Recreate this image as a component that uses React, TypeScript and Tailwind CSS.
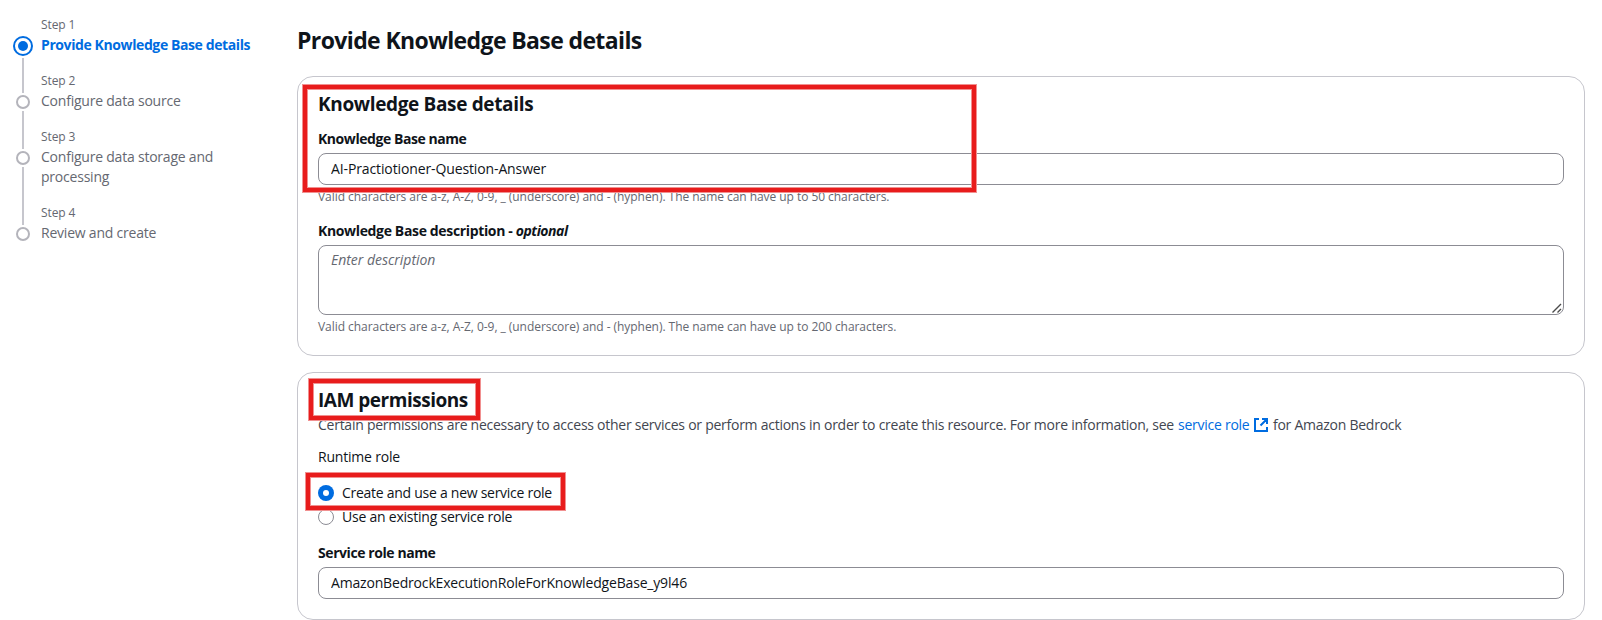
import type { ReactNode } from "react";

const font = "font-['Open_Sans','Noto_Sans',sans-serif]";

const steps = [
  { label: "Configure data source", n: 2 },
  { label: "Configure data storage and processing", n: 3 },
  { label: "Review and create", n: 4 },
];

function Dot() {
  return <span className="size-[14px] shrink-0 rounded-full border-2 border-[#b4b4bb]" />;
}

function StepNav() {
  return (
    <nav className="flex w-[297px] shrink-0 gap-2 pl-[13px]">
      <div className="flex w-5 flex-col items-center gap-0.5 pt-9">
        <span className="flex size-5 shrink-0 items-center justify-center rounded-full border-2 border-[#006ce0]">
          <span className="size-2.5 rounded-full bg-[#006ce0]" />
        </span>
        <span className="h-[35px] w-0.5 bg-[#c6c6cd]" />
        <Dot />
        <span className="h-[38px] w-0.5 bg-[#c6c6cd]" />
        <Dot />
        <span className="h-[58px] w-0.5 bg-[#c6c6cd]" />
        <Dot />
      </div>
      <ol className="flex w-[212px] flex-col gap-[18px] pt-[17px] text-sm text-[#656871]">
        <li className="flex flex-col gap-0.5">
          <span className="text-xs leading-4 tracking-[-0.1px]">Step 1</span>
          <span className="whitespace-nowrap font-bold leading-5 tracking-[-0.4px] text-[#006ce0]">Provide Knowledge Base details</span>
        </li>
        {steps.map((s) => (
          <li key={s.n} className="flex flex-col gap-0.5">
            <span className="text-xs leading-4 tracking-[-0.1px]">Step {s.n}</span>
            <span className="leading-5 tracking-[-0.22px]">{s.label}</span>
          </li>
        ))}
      </ol>
    </nav>
  );
}

function Card({ children }: { children: ReactNode }) {
  return <section className="flex flex-col rounded-2xl border border-[#c6c6cd] px-5 pb-5 pt-[15px]">{children}</section>;
}

function Highlight({ className }: { className: string }) {
  return (
    <div className={`pointer-events-none absolute border border-[#f19090] ${className}`}>
      <div className="size-full border-4 border-[#e81c1c]">
        <div className="size-full border border-[#f19090]" />
      </div>
    </div>
  );
}

function TextInput({ value, className }: { value: string; className: string }) {
  return (
    <input
      type="text"
      defaultValue={value}
      className={`h-8 w-full rounded-lg border border-[#8c8c94] px-3 pb-px text-sm leading-5 text-[#0f141a] outline-none ${className}`}
    />
  );
}

const helper = "text-xs leading-4 tracking-[-0.05px] text-[#656871]";
const label = "text-sm font-bold leading-5";

export default function App() {
  return (
    <div className={`relative flex h-[620px] w-[1602px] overflow-hidden bg-white text-[#0f141a] ${font}`}>
      <StepNav />
      <main className="flex w-[1288px] flex-col pt-[25px]">
        <h1 className="h-[51px] text-[23px] font-bold leading-[30px] tracking-[-0.62px]">Provide Knowledge Base details</h1>
        <div className="flex flex-col gap-4">
          <Card>
            <h2 className="text-[19px] font-bold leading-6 tracking-[-0.35px]">Knowledge Base details</h2>
            <label className={`mt-[13px] tracking-[-0.44px] ${label}`}>Knowledge Base name</label>
            <TextInput className="mt-1 tracking-[-0.12px]" value="AI-Practiotioner-Question-Answer" />
            <p className={`mt-1 ${helper}`}>
              Valid characters are a-z, A-Z, 0-9, _ (underscore) and - (hyphen). The name can have up to 50 characters.
            </p>
            <label className={`mt-4 tracking-[-0.35px] ${label}`}>
              Knowledge Base description - <i className="tracking-[-0.45px]">optional</i>
            </label>
            <div className="relative mt-1 h-[70px]">
              <textarea
                placeholder="Enter description"
                className="block h-[70px] w-full resize-none rounded-lg border border-[#8c8c94] px-3 py-1 text-sm leading-5 tracking-[-0.02px] outline-none placeholder:italic placeholder:text-[#656871]"
              />
              <svg className="absolute bottom-[2px] right-[2px] size-[10px]" viewBox="0 0 10 10" stroke="#4a4a4a" strokeWidth="1.4">
                <path d="M0.5 9.5L9 1M5.5 9.5L9 6" />
              </svg>
            </div>
            <p className={`mt-1 ${helper}`}>
              Valid characters are a-z, A-Z, 0-9, _ (underscore) and - (hyphen). The name can have up to 200 characters.
            </p>
          </Card>
          <Card>
            <h2 className="text-[19px] font-bold leading-6 tracking-[-0.48px]">IAM permissions</h2>
            <p className="mt-[3px] flex text-sm leading-5 tracking-[-0.256px] text-[#424650]">
              <span className="w-[860px] whitespace-nowrap">
                Certain permissions are necessary to access other services or perform actions in order to create this resource. For more information, see
              </span>
              <a className="w-[76px] text-[#006ce0]">service role</a>
              <svg className="mt-[3px] size-[14px]" viewBox="0 0 14 14" fill="none" stroke="#006ce0" strokeWidth="2">
                <path d="M5 1H1v12h12V9M8 1h5v5M13 1L6.5 7.5" />
              </svg>
              <span className="ml-[5px]">for Amazon Bedrock</span>
            </p>
            <p className="mt-3 text-sm leading-5 tracking-[-0.2px]">Runtime role</p>
            <label className="mt-4 flex items-center gap-2 text-sm leading-5 tracking-[-0.27px]">
              <span className="flex size-4 items-center justify-center rounded-full bg-[#006ce0]">
                <span className="size-1.5 rounded-full bg-white" />
              </span>
              Create and use a new service role
            </label>
            <label className="mt-1 flex items-center gap-2 text-sm leading-5 tracking-[-0.23px]">
              <span className="size-4 rounded-full border border-[#8c8c94]" />
              Use an existing service role
            </label>
            <label className={`mt-4 tracking-[-0.42px] ${label}`}>Service role name</label>
            <TextInput className="mt-1 tracking-[-0.175px]" value="AmazonBedrockExecutionRoleForKnowledgeBase_y9l46" />
          </Card>
        </div>
      </main>
      <Highlight className="left-[302px] top-[84px] h-[109px] w-[675px]" />
      <Highlight className="left-[308px] top-[378px] h-[43px] w-[173px]" />
      <Highlight className="left-[305px] top-[472px] h-[39px] w-[261px]" />
    </div>
  );
}
